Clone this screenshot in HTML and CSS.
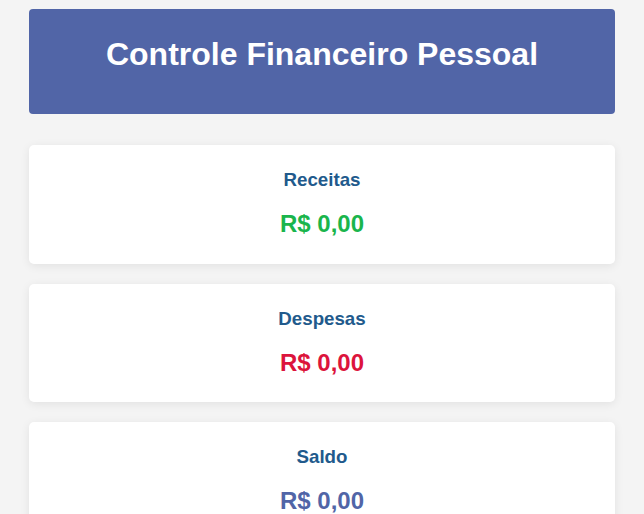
FILE: index.html
```html
<!DOCTYPE html>
<html lang="pt-BR">
<head>
<meta charset="utf-8">
<title>Controle Financeiro Pessoal</title>
<link rel="stylesheet" href="styles.css">
</head>
<body>
  <div class="container">
    <header class="header">
      <h1 class="title">Controle Financeiro Pessoal</h1>
    </header>
    <section class="card">
      <h3 class="card-title">Receitas</h3>
      <div class="amount amount-income">R$ 0,00</div>
    </section>
    <section class="card">
      <h3 class="card-title">Despesas</h3>
      <div class="amount amount-expense">R$ 0,00</div>
    </section>
    <section class="card">
      <h3 class="card-title">Saldo</h3>
      <div class="amount amount-balance">R$ 0,00</div>
    </section>
  </div>
</body>
</html>
```

FILE: styles.css
```css
* { box-sizing: border-box; }

html, body {
  margin: 0;
  padding: 0;
  background: #f4f4f4;
  font-family: "Liberation Sans", Arial, sans-serif;
}

.container {
  width: 586px;
  margin: 9px auto 0;
  display: flex;
  flex-direction: column;
  gap: 20px;
}

.header {
  background: #5165a7;
  border-radius: 4px;
  padding: 27px 20px 0;
  height: 105px;
  margin-bottom: 11px;
  text-align: center;
}

.title {
  margin: 0;
  color: #ffffff;
  font-size: 32px;
  font-weight: bold;
}

.card {
  background: #ffffff;
  border-radius: 5px;
  box-shadow: 0 2px 10px rgba(0, 0, 0, 0.08);
  padding: 24px 20px 0;
  text-align: center;
  height: 118.6px;
}

.card-title {
  margin: 0 0 19px;
  font-size: 18.72px;
  font-weight: bold;
  color: #215a8c;
}

.amount {
  font-size: 24px;
  font-weight: bold;
}

.amount-income { color: #1ab54c; }
.amount-expense { color: #dc143c; }
.amount-balance { color: #5165a7; }
```
